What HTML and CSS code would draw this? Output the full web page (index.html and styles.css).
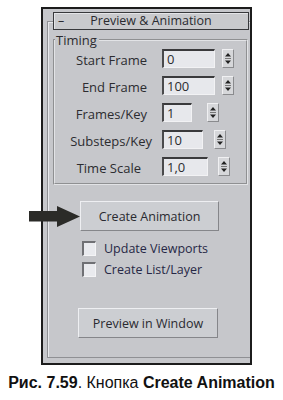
FILE: index.html
```html
<!DOCTYPE html>
<html>
<head>
<meta charset="utf-8">
<link rel="stylesheet" href="styles.css">
</head>
<body>
<div class="panel">
  <div class="rollout">
    <div class="rollout-head">
      <span class="minus">–</span>
      <span class="title">Preview &amp; Animation</span>
      <span></span>
    </div>
    <fieldset class="group">
      <legend>Timing</legend>
      <div class="row">
        <span class="label">Start Frame</span>
        <span class="field w-long">0</span>
        <span class="spin g7"><svg viewBox="0 0 12 19" width="12" height="19"><path d="M6 4 L9 7.5 H3 Z M6 15 L9 11.5 H3 Z" fill="#222"/><path d="M3 9.5 H9" stroke="#777" stroke-width="1"/></svg></span>
      </div>
      <div class="row">
        <span class="label">End Frame</span>
        <span class="field w-long">100</span>
        <span class="spin g7"><svg viewBox="0 0 12 19" width="12" height="19"><path d="M6 4 L9 7.5 H3 Z M6 15 L9 11.5 H3 Z" fill="#222"/><path d="M3 9.5 H9" stroke="#777" stroke-width="1"/></svg></span>
      </div>
      <div class="row">
        <span class="label">Frames/Key</span>
        <span class="field w-fk">1</span>
        <span class="spin g15"><svg viewBox="0 0 12 19" width="12" height="19"><path d="M6 4 L9 7.5 H3 Z M6 15 L9 11.5 H3 Z" fill="#222"/><path d="M3 9.5 H9" stroke="#777" stroke-width="1"/></svg></span>
      </div>
      <div class="row">
        <span class="label label-sub">Substeps/Key</span>
        <span class="field w-sub">10</span>
        <span class="spin g11"><svg viewBox="0 0 12 19" width="12" height="19"><path d="M6 4 L9 7.5 H3 Z M6 15 L9 11.5 H3 Z" fill="#222"/><path d="M3 9.5 H9" stroke="#777" stroke-width="1"/></svg></span>
      </div>
      <div class="row">
        <span class="label label-time">Time Scale</span>
        <span class="field w-time">1,0</span>
        <span class="spin g10"><svg viewBox="0 0 12 19" width="12" height="19"><path d="M6 4 L9 7.5 H3 Z M6 15 L9 11.5 H3 Z" fill="#222"/><path d="M3 9.5 H9" stroke="#777" stroke-width="1"/></svg></span>
      </div>
    </fieldset>
    <div class="btn btn-create">
      Create Animation
      <svg class="arrow" viewBox="0 0 52 21" width="52" height="21"><path d="M0 5 H28 V0 L51 10.5 L28 21 V15.5 H0 Z" fill="#2b2b28"/></svg>
    </div>
    <div class="check"><span class="box"></span><span class="ctext">Update Viewports</span></div>
    <div class="check"><span class="box"></span><span class="ctext">Create List/Layer</span></div>
    <div class="btn btn-preview">Preview in Window</div>
  </div>
</div>
<p class="caption"><b>Рис. 7.59</b>. Кнопка <b>Create Animation</b></p>
</body>
</html>
```
FILE: styles.css
```css
html, body {
  margin: 0;
  padding: 0;
  background: #fff;
}
body {
  font-family: "Open Sans", "DejaVu Sans", sans-serif;
  font-size: 12px;
  color: #2c2c30;
  overflow: hidden;
}
.panel {
  margin: 7px 0 0 41px;
  width: 207px;
  padding: 0 0 5px 0;
  border: 2px solid #1c1c1c;
  background: #c6c7cb;
}
.rollout {
  margin: 12px 0 0 4px;
  border-top: 1px solid #8f9094;
  border-left: 1px solid #8f9094;
  border-bottom: 1px solid #8f9094;
  box-shadow: inset 1px 1px 0 #e8e9ec;
  padding: 1px 0 19px 1px;
}
.rollout-head {
  margin: -11px 0 0 4px;
  width: 194px;
  height: 16px;
  border: 1px solid #38393c;
  background: #c9cacd;
  box-shadow: inset 1px 1px 0 #e4e5e8;
  display: grid;
  grid-template-columns: 18px 1fr 18px;
  align-items: center;
  line-height: 16px;
  font-size: 12.5px;
  color: #2a2a30;
}
.minus {
  padding-left: 4px;
}
.title {
  text-align: center;
}
.group {
  margin: 2px 0 0 4px;
  width: 191px;
  padding: 1px 0 7px 0;
  border: 2px groove #e2e3e6;
  min-width: 0;
}
.group legend {
  padding: 0 2px 0 1px;
  margin-left: 0;
  line-height: 16px;
  font-size: 13px;
}
.row {
  display: flex;
  align-items: center;
  height: 19px;
  margin-top: 8px;
}
.row:first-of-type {
  margin-top: 0;
}
.label {
  width: 100px;
  box-sizing: border-box;
  text-align: right;
  padding-right: 8px;
  margin-right: 7px;
  font-size: 13px;
  white-space: nowrap;
  line-height: 19px;
  padding-top: 3px;
}
.label-sub {
  padding-right: 3px;
}
.label-time {
  padding-right: 14px;
}
.field {
  box-sizing: border-box;
  height: 19px;
  background: #e7e8ec;
  border-top: 2px solid #3a3a3c;
  border-left: 2px solid #4a4a4c;
  border-right: 1px solid #f2f2f4;
  border-bottom: 1px solid #f2f2f4;
  padding-left: 3px;
  line-height: 16px;
  font-size: 13px;
}
.w-long { width: 53px; }
.w-fk { width: 30px; }
.w-sub { width: 41px; }
.w-time { width: 46px; }
.spin {
  display: block;
  width: 12px;
  height: 19px;
  box-sizing: border-box;
  background: #d6d7da;
  border-top: 1px solid #f0f0f2;
  border-left: 1px solid #f0f0f2;
  border-right: 1px solid #8a8b8e;
  border-bottom: 1px solid #8a8b8e;
  overflow: hidden;
}
.spin svg {
  display: block;
  margin: -1px 0 0 -1px;
}
.g7 { margin-left: 7px; }
.g10 { margin-left: 10px; }
.g11 { margin-left: 11px; }
.g15 { margin-left: 15px; }
.btn {
  box-sizing: border-box;
  width: 139px;
  height: 30px;
  margin-left: 31px;
  background: #ccced2;
  border-top: 1px solid #eeeff2;
  border-left: 1px solid #eeeff2;
  border-right: 1px solid #85868a;
  border-bottom: 1px solid #85868a;
  display: flex;
  align-items: center;
  justify-content: center;
  font-size: 12.5px;
  color: #2a2a30;
}
.btn-create {
  margin-top: 16px;
  position: relative;
}
.arrow {
  position: absolute;
  left: -52px;
  top: 4px;
}
.check {
  display: flex;
  align-items: center;
  height: 21px;
  margin-left: 33px;
}
.btn-create + .check {
  margin-top: 7px;
}
.box {
  box-sizing: border-box;
  width: 14px;
  height: 15px;
  background: #e9eaee;
  border-top: 2px solid #6f7074;
  border-left: 2px solid #6f7074;
  border-right: 1px solid #f4f4f6;
  border-bottom: 1px solid #f4f4f6;
  margin-right: 8px;
}
.ctext {
  font-size: 12.5px;
  color: #262846;
}
.btn-preview {
  margin-top: 28px;
  margin-left: 29px;
  width: 140px;
}
.caption {
  margin: 9px 0 0 0;
  text-align: center;
  font-family: "Liberation Sans", Arial, sans-serif;
  font-size: 16px;
  line-height: 18px;
  color: #111;
}
```
